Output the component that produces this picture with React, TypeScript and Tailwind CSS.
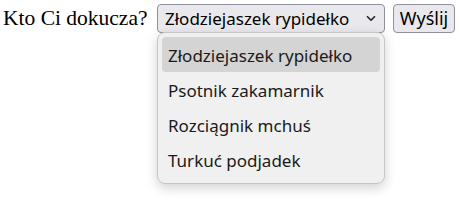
import React from "react";

const items = ["Złodziejaszek rypidełko", "Psotnik zakamarnik", "Rozciągnik mchuś", "Turkuć podjadek"];

export default function App() {
  return (
    <div className="relative h-[209px] w-[462px] bg-white font-['Noto_Sans',sans-serif]">
      <div className="flex items-center pl-[3px] pt-[4px]">
        <span className="w-[154px] font-['Liberation_Serif',serif] text-[21.5px] leading-[29px] text-black">
          Kto Ci dokucza?
        </span>
        <div className="flex h-[29px] w-[228px] items-center justify-between rounded-[4px] border border-[#8f8f9d] bg-[#e9e9ed] pl-[7px] pr-[8px] text-[17px] text-black">
          <span>Złodziejaszek rypidełko</span>
          <svg width="10" height="7" viewBox="0 0 10 7" fill="none">
            <path d="M1 1.2l4 4 4-4" stroke="#222" strokeWidth="1.6" />
          </svg>
        </div>
        <div className="ml-[8px] flex h-[29px] w-[62px] items-center justify-center rounded-[4px] border border-[#8f8f9d] bg-[#e9e9ed] text-[18px] text-black">
          Wyślij
        </div>
      </div>
      <div className="absolute left-[157px] top-[32px] w-[228px] rounded-[8px] border border-[#c6c6c6] bg-[#f0f0f0] px-[4px] pb-[6px] pt-[4px] shadow-[0_4px_12px_rgba(0,0,0,0.18)]">
        {items.map((it, i) => (
          <div
            key={it}
            className={`flex h-[35px] items-center rounded-[4px] px-[6px] pt-[3px] text-[17px] text-[#1a1a1a] ${i === 0 ? "bg-[#d4d4d4]" : ""}`}
          >
            {it}
          </div>
        ))}
      </div>
    </div>
  );
}
